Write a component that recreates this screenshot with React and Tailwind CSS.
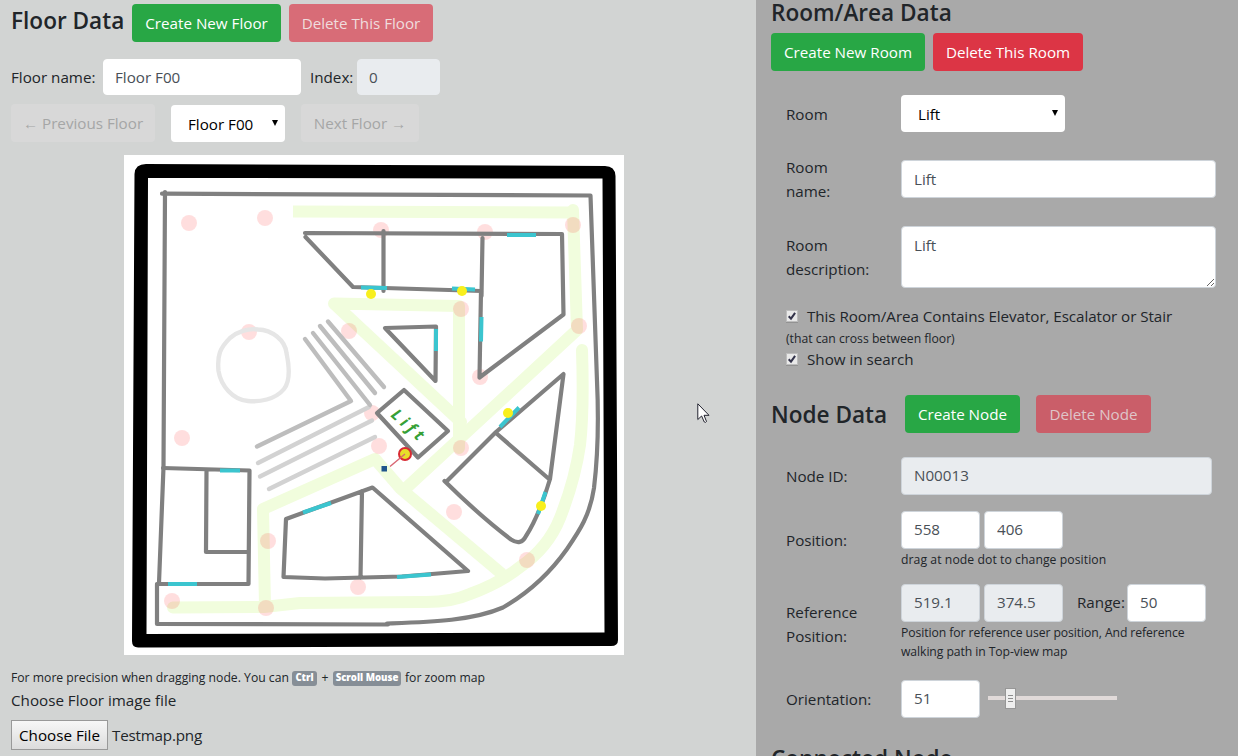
import React from "react";

const font = "font-['Open_Sans','Noto_Sans',sans-serif]";

function Button({ className = "", children }) {
  return (
    <button className={`flex h-[38px] shrink-0 items-center justify-center whitespace-nowrap rounded pt-px ${className}`}>
      {children}
    </button>
  );
}

function Field({ className = "", height = "h-[38px]", readOnly = false, value }) {
  return (
    <input
      readOnly
      value={value}
      className={`block shrink-0 rounded border px-3 pb-px text-[#495057] outline-none ${height} ${readOnly ? "bg-[#e9ecef]" : "bg-white"} ${className}`}
    />
  );
}

function Select({ className = "", value }) {
  return (
    <div className={`flex h-[37px] shrink-0 items-center justify-between rounded bg-white pt-px pr-[7px] pl-[17px] text-black ${className}`}>
      <span>{value}</span>
      <svg width="6" height="6" viewBox="0 0 6 6" className="mb-[3px]">
        <path d="M0 0h6L3 6z" fill="#000" />
      </svg>
    </div>
  );
}

function Label({ className = "", children }) {
  return <div className={`w-[130px] shrink-0 pl-[15px] leading-6 ${className}`}>{children}</div>;
}

function Check() {
  return (
    <svg width="12" height="13" viewBox="0 0 12 13" className="mr-[9px] shrink-0">
      <rect x="0.5" y="0.5" width="11" height="11" fill="#e9e9e9" stroke="#bdbdbd" />
      <path d="M0 12.5h12" stroke="#929292" />
      <path d="M2.7 6.2 5 8.6 9.1 2.8" fill="none" stroke="#33334a" strokeWidth="2" />
    </svg>
  );
}

const pinkNodes = [
  [189, 223], [265, 218], [381, 230], [485, 232], [573, 225], [579, 326],
  [461, 309], [480, 377], [349, 331], [249, 332], [182, 438], [372, 413],
  [379, 446], [461, 448], [454, 512], [527, 560], [268, 541], [266, 608],
  [172, 601], [358, 587],
];
const yellowNodes = [[371, 294], [462, 291], [508, 413], [541, 506]];

function FloorMap() {
  return (
    <svg width="500" height="500" viewBox="124 155 500 500" className="block shrink-0 bg-white">
      <path
        d="M146 164 605 166Q615 166 615.5 176L618 640Q618 646 611 646L139 647.500Q132 648 132 641L134.500 174Q135 164 146 164ZM148 178 146.500 634 604.500 632.500 602.500 178.500Z"
        fill="#000"
        fillRule="evenodd"
      />
      <g fill="none" stroke="#f1fddd" strokeWidth="12" strokeLinejoin="round">
        <path d="M293 211.500 573 212.500" />
        <path d="M573 210 577 330 404 490" strokeLinecap="round" />
        <path d="M459 448V306L334 303.500 461 422" strokeLinecap="round" />
        <path d="M173 607.500 264 607 300 603 420 602Q450 603 470 594 500 583 520 567 548 548 560 518 575 480 580 445 584 410 582 350" strokeLinecap="round" />
        <path d="M265 606 263 509 375 459 401 489 502 574" />
      </g>
      <g fill="#ff0000" fillOpacity="0.13">
        {pinkNodes.map(([x, y]) => (
          <circle key={`${x}-${y}`} cx={x} cy={y} r="8" />
        ))}
      </g>
      <path
        d="M258 329.500C272 330 285 340 286.500 353Q292 379 284 389C275 400 259 402 248 401 233 400 221 386 218.500 371 217 355 220 348 230 338 237 332 248 328 258 329.500Z"
        fill="none"
        stroke="#e6e6e6"
        strokeWidth="4.4"
      />
      <g fill="none" stroke="#bdbdbd" strokeWidth="4.4" strokeLinecap="round" strokeLinejoin="round">
        <path d="M369 407 258 463M372 420.500 260 476.500M375 437 269 489" stroke="#d2d2d2" />
        <path d="M305 339 351 401 257 446.500" />
        <path d="M313 333 370 405" />
        <path d="M320 326 375 393" />
        <path d="M328 321.500 384 387" />
      </g>
      <g fill="none" stroke="#808080" strokeWidth="4.2" strokeLinecap="round" strokeLinejoin="round">
        <path d="M162 193.700 590.500 195.500 597 381C599 425 598 455 594 488 590 515 580 530 567 549 550 573 530 592 503 607.500 472 621 429 622 387 623.500M388 624.500 157 624V584.500" />
        <path d="M165 192 163.500 467 159 583" />
        <path d="M163 468 249.500 470.500 248.500 584H157M206.500 471 206 552H247" />
        <path d="M305 233 562 234 563.500 314.500 479.500 377.500 481 291 353 287 305.500 237" />
        <path d="M383.500 231V291M482.500 238 481.500 296" />
        <path d="M385 328 436 326.500 435.500 381Z" />
        <path d="M404 390 448 431 418 457.500 377 413Z" />
        <path d="M446 482 496 432 563.500 374 550 479Q539 516 526 536 521 546 511 539.500 480 516 444.500 481M496 433 549 479" />
        <path d="M286 519 372.500 487.500 468 571 402 576.500 325 578.500 283.500 577ZM362 491 360.500 578" />
      </g>
      <g fill="none" stroke="#3bc5cf" strokeWidth="4">
        <path d="M507 235H536M361 287.500 387 288M452 288.500 475 289.500M481.500 317 481 341.500M436 329V351M220 470.500H240M168 584H197M303 512.500 331 503M397 577 431 574.500M500 427 519 407.500M545.500 492 538 514" />
      </g>
      <text
        x="390"
        y="416"
        transform="rotate(42 390 416)"
        fill="#36a036"
        fontSize="16"
        fontStyle="italic"
        fontWeight="700"
        textLength="38"
        className="font-['Open_Sans',sans-serif]"
      >
        Lift
      </text>
      <g fill="#f8ef1d">
        {yellowNodes.map(([x, y]) => (
          <circle key={`${x}-${y}`} cx={x} cy={y} r="5" />
        ))}
      </g>
      <circle cx="405" cy="454" r="6" fill="#e7df29" stroke="#d82a32" strokeWidth="2" />
      <path d="M390 466.500 405 454" stroke="#d86672" strokeWidth="1.400" />
      <rect x="381.500" y="466" width="5.500" height="5.500" fill="#20558c" />
    </svg>
  );
}

function Slider() {
  return (
    <svg width="129" height="21" viewBox="0 0 129 21" className="ml-2 shrink-0">
      <path d="M0 8h129v4H0z" fill="#e1dad9" />
      <rect x="17.500" y="0.500" width="10" height="20" fill="#efefef" stroke="#979797" />
      <path d="M20 7.500h5M20 10.500h5M20 13.500h5" stroke="#8e8e8e" />
    </svg>
  );
}

function Heading({ className = "", children }) {
  return <h3 className={`shrink-0 whitespace-nowrap text-[22.6px] leading-none font-semibold ${className}`}>{children}</h3>;
}

function FloorPanel() {
  return (
    <section className="flex w-[756px] shrink-0 flex-col bg-[#d2d4d3] pt-1 pl-[11px]">
      <div className="flex h-[38px] items-center">
        <Heading className="w-[121px] pb-[3px]">Floor Data</Heading>
        <Button className="w-[149px] bg-[#28a745] text-white">Create New Floor</Button>
        <Button className="ml-2 w-[144px] bg-[#d86c77] text-[#f0dcdd]">Delete This Floor</Button>
      </div>
      <div className="mt-[17px] flex h-9 items-center">
        <span className="w-[92px]">Floor name:</span>
        <Field value="Floor F00" height="h-9" className="w-[198px] border-white pl-[11px]" />
        <span className="ml-[9px] w-[47px]">Index:</span>
        <Field value="0" readOnly height="h-9" className="w-[83px] border-[#e9ecef] pl-[11px]" />
      </div>
      <div className="mt-[9px] flex h-[38px] items-center">
        <Button className="w-[144px] bg-[#d8d8d8] text-[#a5a6a6]">← Previous Floor</Button>
        <Select value="Floor F00" className="mt-px ml-4 w-[114px]" />
        <Button className="ml-4 w-[118px] bg-[#d8d8d8] text-[#a5a6a6]">Next Floor →</Button>
      </div>
      <div className="mt-[13px] flex pl-[113px]">
        <FloorMap />
      </div>
      <div className="mt-[13px] flex h-5 items-center text-[12.2px]">
        <span className="w-[281px]">For more precision when dragging node. You can</span>
        <kbd className="flex h-[15px] w-[25px] items-center justify-center rounded-[3px] bg-[#868e96] pt-px font-['Open_Sans',sans-serif] text-[9.6px] font-extrabold text-white">Ctrl</kbd>
        <span className="w-4 text-center">+</span>
        <kbd className="flex h-[15px] w-[68px] items-center justify-center rounded-[3px] bg-[#868e96] pt-px font-['Open_Sans',sans-serif] text-[9.6px] font-extrabold whitespace-nowrap text-white">Scroll Mouse</kbd>
        <span className="ml-1">for zoom map</span>
      </div>
      <div className="flex h-6 items-center">Choose Floor image file</div>
      <div className="mt-2 flex h-[30px] items-center">
        <button className="mr-1 flex h-[30px] w-[97px] items-center justify-center border border-[#999] bg-linear-to-b from-[#f7f7f7] to-[#dcdcdc] text-black">Choose File</button>
        <span className="tracking-[-0.2px]">Testmap.png</span>
      </div>
    </section>
  );
}

function RoomPanel() {
  return (
    <section className="flex w-[482px] shrink-0 flex-col bg-[#a9a9a9] pl-[15px]">
      <Heading className="flex h-[26px] items-center">Room/Area Data</Heading>
      <div className="mt-[7px] flex gap-2">
        <Button className="w-[154px] bg-[#28a745] text-white">Create New Room</Button>
        <Button className="w-[150px] bg-[#dc3545] text-white">Delete This Room</Button>
      </div>
      <div className="mt-6 flex items-center">
        <Label>Room</Label>
        <Select value="Lift" className="w-[164px]" />
      </div>
      <div className="mt-[23px] flex items-center">
        <Label>Room<br />name:</Label>
        <Field value="Lift" className="w-[315px] border-[#ced4da]" />
      </div>
      <div className="mt-[23px] flex items-center">
        <Label className="pr-4">Room description:</Label>
        <textarea readOnly value="Lift" className="block h-[62px] w-[315px] resize rounded border border-[#ced4da] bg-white px-3 py-[6px] leading-6 text-[#495057]" />
      </div>
      <div className="mt-[17px] flex h-6 items-center pl-[15px] tracking-[-0.06px] whitespace-nowrap"><Check />This Room/Area Contains Elevator, Escalator or Stair</div>
      <div className="flex h-[19px] items-center pt-[3px] pl-[15px] text-[12.2px]">(that can cross between floor)</div>
      <div className="mt-px flex h-6 items-center pl-[15px]"><Check />Show in search</div>
      <div className="mt-6 flex items-center">
        <Heading className="w-[134px] pt-1">Node Data</Heading>
        <Button className="w-[115px] bg-[#28a745] text-white">Create Node</Button>
        <Button className="ml-4 w-[115px] bg-[#ca5e69] text-[#dfc5c8]">Delete Node</Button>
      </div>
      <div className="mt-6 flex items-center">
        <Label>Node ID:</Label>
        <Field value="N00013" readOnly className="w-[311px] border-[#ced4da]" />
      </div>
      <div className="mt-4 flex items-center">
        <Label>Position:</Label>
        <div>
          <div className="flex gap-1">
            <Field value="558" className="w-[79px] border-[#ced4da]" />
            <Field value="406" className="w-[79px] border-[#ced4da]" />
          </div>
          <p className="mt-px text-[12.2px] leading-[19px] tracking-[0.07px]">drag at node dot to change position</p>
        </div>
      </div>
      <div className="mt-[15px] flex items-center">
        <Label className="pt-1 pr-4">Reference Position:</Label>
        <div>
          <div className="flex items-center">
            <Field value="519.1" readOnly className="w-[79px] border-[#ced4da]" />
            <Field value="374.5" readOnly className="ml-1 w-[79px] border-[#ced4da]" />
            <span className="ml-[14px] w-[50px]">Range:</span>
            <Field value="50" className="w-[79px] border-[#ced4da]" />
          </div>
          <p className="mt-px text-[12.2px] leading-[19px] tracking-[-0.08px] whitespace-nowrap">
            Position for reference user position, And reference<br />walking path in Top-view map
          </p>
        </div>
      </div>
      <div className="mt-[19px] flex items-center">
        <Label>Orientation:</Label>
        <Field value="51" className="w-[79px] border-[#ced4da]" />
        <Slider />
      </div>
      <Heading className="mt-[30px]">Connected Node</Heading>
    </section>
  );
}

export default function App() {
  return (
    <main className={`relative flex h-[756px] w-[1238px] overflow-hidden text-[15.2px] text-[#212529] ${font}`}>
      <FloorPanel />
      <RoomPanel />
      <svg width="13" height="21" viewBox="0 0 13 21" className="absolute top-[403px] left-[697px]">
        <path d="M.8.8v15.700L4.600 13 7.300 19Q8.500 20 9.500 18.500L7 12.300H12Z" fill="#fff" stroke="#22222e" strokeWidth="1" />
      </svg>
    </main>
  );
}
